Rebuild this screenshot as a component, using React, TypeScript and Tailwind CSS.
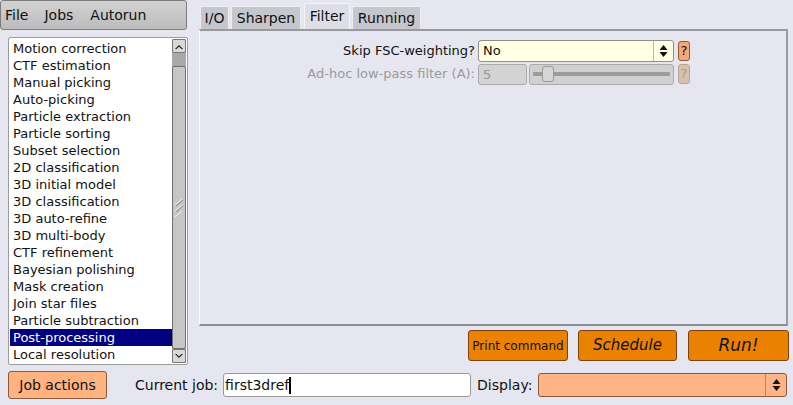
const jobs = [
  "Import",
  "Motion correction",
  "CTF estimation",
  "Manual picking",
  "Auto-picking",
  "Particle extraction",
  "Particle sorting",
  "Subset selection",
  "2D classification",
  "3D initial model",
  "3D classification",
  "3D auto-refine",
  "3D multi-body",
  "CTF refinement",
  "Bayesian polishing",
  "Mask creation",
  "Join star files",
  "Particle subtraction",
  "Post-processing",
  "Local resolution",
];

const tabs = [
  { label: "I/O", w: "w-[29px]" },
  { label: "Sharpen", w: "w-[70px] ml-[2px]" },
  { label: "Filter", w: "w-[46px] ml-[3px]" },
  { label: "Running", w: "w-[69px] ml-[2px]" },
];

const Caret = ({ down = false }: { down?: boolean }) => (
  <svg width="8" height="5" viewBox="0 0 8 5">
    <path d={down ? "M0 0 L4 4 L8 0 L6.5 0 L4 2.5 L1.5 0 Z" : "M0 5 L4 1 L8 5 L6.5 5 L4 2.5 L1.5 5 Z"} fill="#111" />
  </svg>
);

const UpDown = () => (
  <svg width="9" height="14" viewBox="0 0 9 14">
    <path d="M0.5 6 L4.5 1 L8.5 6 Z" fill="#111" />
    <path d="M0.5 8 L4.5 13 L8.5 8 Z" fill="#111" />
  </svg>
);

const Scrollbar = () => (
  <div className="w-[14px] h-full flex flex-col bg-[#a9a9a9]">
    <div className="h-[14px] shrink-0 rounded-[2px] border border-[#777] bg-[#d9d9d9] flex items-center justify-center">
      <Caret />
    </div>
    <div className="h-[13px] shrink-0" />
    <div className="flex-1 rounded-[2px] border border-[#6f6f6f] bg-[#c6c6c6] flex items-center justify-center">
      <svg width="10" height="18" viewBox="0 0 10 18">
        <path d="M1 6 L8 0 M1 12 L8 6 M1 18 L8 12" stroke="#f2f2f2" strokeWidth="1" />
        <path d="M2 7 L9 1 M2 13 L9 7" stroke="#8a8a8a" strokeWidth="1" />
      </svg>
    </div>
    <div className="h-[14px] shrink-0 rounded-[2px] border border-[#777] bg-[#d9d9d9] flex items-center justify-center">
      <Caret down />
    </div>
  </div>
);

export default function App() {
  return (
    <div
      className="w-[793px] h-[405px] bg-[#e6e6f0] flex flex-col overflow-hidden text-[#111]"
      style={{ fontFamily: '"DejaVu Sans", Verdana, sans-serif' }}
    >
      <div className="flex h-[367px]">
        {/* left column */}
        <div className="w-[199px] shrink-0 flex flex-col">
          <div className="w-[187px] h-[30px] rounded-[3px] border border-[#7d7d7d] bg-gradient-to-b from-[#d2d2d2] to-[#bcbcbc] flex items-center text-[14px] pt-[1px]">
            <span className="ml-[4px]">File</span>
            <span className="ml-[16px]">Jobs</span>
            <span className="ml-[17px]">Autorun</span>
          </div>
          <div className="ml-[8px] mt-[7px] w-[180px] h-[328px] border border-[#9c9c9c] rounded-[2px] bg-white flex p-[1px]">
            <div className="flex-1 overflow-hidden">
              <div className="-mt-[16px]">
                {jobs.map((j) => (
                  <div
                    key={j}
                    className={
                      "h-[17px] leading-[17px] pl-[3px] text-[13px] whitespace-nowrap " +
                      (j === "Post-processing" ? "bg-[#000080] text-white" : "")
                    }
                  >
                    {j}
                  </div>
                ))}
              </div>
            </div>
            <Scrollbar />
          </div>
        </div>

        {/* right column */}
        <div className="flex-1 flex flex-col">
          <div className="flex items-end h-[29px] pl-[1px]">
            {tabs.map((t) => (
              <div
                key={t.label}
                className={
                  t.w +
                  " text-center text-[14px] border-t border-l border-r rounded-t-[2px] " +
                  (t.label === "Filter"
                    ? "h-[26px] leading-[24px] bg-[#dedee6] border-[#f4f4f8]"
                    : "h-[23px] leading-[22px] bg-[#c6c6ce] border-[#eeeeee]")
                }
              >
                {t.label}
              </div>
            ))}
          </div>
          <div className="w-[589px] h-[297px] border-t-2 border-t-[#9a9a9e] border-l border-l-[#fbfbfd] border-r-2 border-r-[#9a9aa0] border-b-2 border-b-[#8c8c92] pt-[9px] flex flex-col gap-[1px]">
            <div className="flex items-center h-[21px]">
              <div className="w-[278px] text-right text-[13px] pr-[3px]">Skip FSC-weighting?</div>
              <div className="w-[196px] h-[22px] border border-[#8f8f8f] rounded-[3px] bg-[#ffffe4] flex items-center text-[13px]">
                <span className="flex-1 pl-[4px]">No</span>
                <div className="w-[20px] h-full border-l border-[#b5b5b5] flex items-center justify-center">
                  <UpDown />
                </div>
              </div>
              <div className="ml-[4px] w-[12px] h-[20px] rounded-[3px] border border-[#8a5a3a] bg-[#f8a775] flex items-center justify-center text-[13px]">?</div>
            </div>
            <div className="flex items-center h-[22px] mt-[1px]">
              <div className="w-[278px] text-right text-[13px] pr-[3px] text-[#9a9a9a]">Ad-hoc low-pass filter (A):</div>
              <div className="w-[49px] h-[21px] border border-[#aaaaaa] rounded-[3px] bg-[#d3d3d3] text-[13px] text-[#999] pl-[4px] leading-[19px]">5</div>
              <div className="ml-[2px] w-[145px] h-[21px] border border-[#aaaaaa] rounded-[3px] bg-[#d0d0d0] flex items-center px-[3px]">
                <div className="relative flex-1 h-[4px] bg-[#9c9c9c] rounded-[1px]">
                  <div className="absolute left-[9px] -top-[6px] w-[12px] h-[16px] rounded-[3px] border border-[#999] bg-[#d6d6d6]" />
                </div>
              </div>
              <div className="ml-[4px] w-[12px] h-[20px] rounded-[3px] border border-[#b9a598] bg-[#d9bfae] text-[#aa9a90] flex items-center justify-center text-[13px]">?</div>
            </div>
          </div>
          <div className="flex justify-end gap-[10px] pr-[4px] mt-[4px]">
            <div className="w-[100px] h-[31px] rounded-[3px] border border-[#7a4310] bg-[#ea8200] flex items-center justify-center text-[12px]">Print command</div>
            <div className="w-[99px] h-[31px] rounded-[3px] border border-[#7a4310] bg-[#ea8200] flex items-center justify-center text-[15px] italic">Schedule</div>
            <div className="w-[101px] h-[31px] ml-[1px] rounded-[3px] border border-[#7a4310] bg-[#ea8200] flex items-center justify-center text-[17px] italic">Run!</div>
          </div>
        </div>
      </div>

      {/* bottom row */}
      <div className="flex items-center h-[38px] pb-[2px]">
        <div className="ml-[8px] w-[99px] h-[28px] rounded-[3px] border border-[#8a5a3a] bg-[#ffb380] flex items-center justify-center text-[14px]">Job actions</div>
        <div className="ml-[28px] text-[14px]">Current job:</div>
        <div className="ml-[5px] w-[248px] h-[24px] border border-[#9a9a9a] rounded-[3px] bg-white flex items-center text-[14px] pl-[1px]">
          first3dref<span className="w-[2px] h-[17px] bg-black" />
        </div>
        <div className="ml-[6px] text-[14px]">Display:</div>
        <div className="ml-[6px] w-[249px] h-[24px] border border-[#8a5a3a] rounded-[3px] bg-[#ffb487] flex justify-end">
          <div className="w-[21px] h-full border-l border-[#c8805a] flex items-center justify-center">
            <UpDown />
          </div>
        </div>
      </div>
    </div>
  );
}
